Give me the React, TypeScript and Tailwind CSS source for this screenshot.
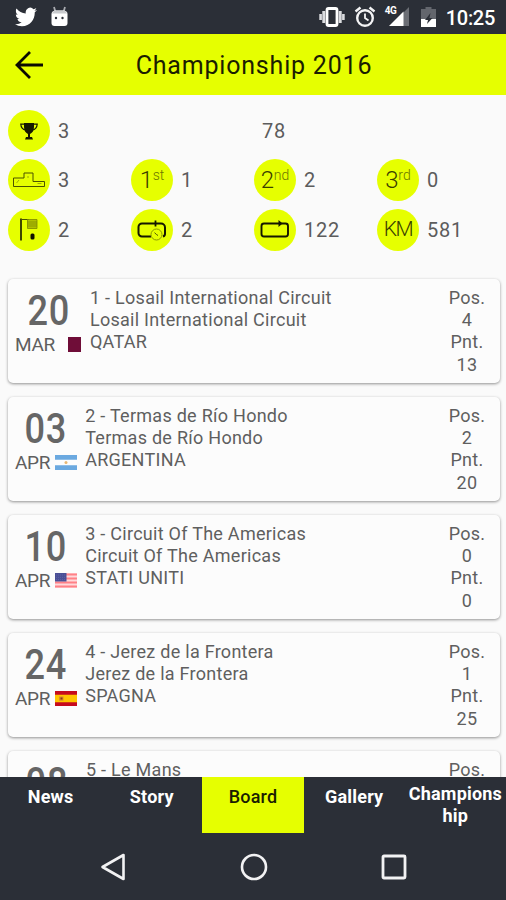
import type { ReactNode } from 'react';

interface Race {
  day: string;
  month: string;
  flag: ReactNode;
  title: string;
  circuit: string;
  country: string;
  pos: number;
  points: number;
}

// Flags, all drawn on a 22x15 box
const Qatar = () => (
  <svg width="22" height="15" viewBox="0 0 22 15">
    <path d="M0 0h9v15H0z" fill="#fdfdfd" />
    <path d="M8 0h13v15H8z" fill="#6f0d38" />
  </svg>
);

const Argentina = () => (
  <svg width="22" height="15" viewBox="0 0 22 15">
    <path d="M0 0h22v15H0z" fill="#fdfdfd" />
    <path d="M0 0h22v4.8H0zM0 10.2h22V15H0z" fill="#6ba9e0" />
    <circle cx="11" cy="7.5" r="1.5" fill="#e8b873" />
  </svg>
);

const Usa = () => (
  <svg width="22" height="15" viewBox="0 0 22 15">
    <path d="M0 0h22v15H0z" fill="#ffd9db" />
    <path d="M0 1.5h22M0 5.5h22M0 9.5h22M0 13.5h22" stroke="#ff8187" strokeWidth="1.8" />
    <path d="M0 0h11.5v8.5H0z" fill="#4a4f96" />
    <path d="M1 2h10M1 4.3h10M1 6.6h10" stroke="#666bab" strokeWidth=".7" strokeDasharray="1 1" />
  </svg>
);

const Spain = () => (
  <svg width="22" height="15" viewBox="0 0 22 15">
    <path d="M0 0h22v15H0z" fill="#ffc400" />
    <path d="M0 0h22v3.7H0zM0 11.3h22V15H0z" fill="#c60b1e" />
    <path d="M4 5.5h4.5v4.2H4z" fill="#d98f2c" />
    <path d="M5.5 6.5h2v2h-2z" fill="#8a3a1c" />
  </svg>
);

const races: Race[] = [
  { day: '20', month: 'MAR', flag: <Qatar />, title: '1 - Losail International Circuit', circuit: 'Losail International Circuit', country: 'QATAR', pos: 4, points: 13 },
  { day: '03', month: 'APR', flag: <Argentina />, title: '2 - Termas de Río Hondo', circuit: 'Termas de Río Hondo', country: 'ARGENTINA', pos: 2, points: 20 },
  { day: '10', month: 'APR', flag: <Usa />, title: '3 - Circuit Of The Americas', circuit: 'Circuit Of The Americas', country: 'STATI UNITI', pos: 0, points: 0 },
  { day: '24', month: 'APR', flag: <Spain />, title: '4 - Jerez de la Frontera', circuit: 'Jerez de la Frontera', country: 'SPAGNA', pos: 1, points: 25 },
];

// Only the top of this one shows above the tab bar
const nextRace = { day: '08', title: '5 - Le Mans' };

const tabs = ['News', 'Story', 'Board', 'Gallery', 'Championship'];

// Icons inside the yellow circles, 42x42
const Trophy = () => (
  <svg width="42" height="42" viewBox="0 0 42 42">
    <path d="M16 13h10v4c0 4-2 6-4 7v3h2l1 2.5h-8l1-2.5h2v-3c-2-1-4-3-4-7z" fill="#151800" />
    <path d="M16 14.2h-3.2c.2 3.2 1.8 5.3 5 5.8M26 14.2h3.2c-.2 3.2-1.8 5.3-5 5.8" fill="none" stroke="#151800" strokeWidth="1.2" />
  </svg>
);

const Podium = () => (
  <svg width="42" height="42" viewBox="0 0 42 42" fill="none" stroke="#4b5300" strokeWidth="1">
    <path d="M5.5 27.5V19h10.5v-5h9v8.500h11.500v5z" />
    <path d="M8.500 24l2.500-3M20 17v2M29.500 24.500h4" stroke="#8c9a00" strokeWidth=".8" />
  </svg>
);

const Flag = () => (
  <svg width="42" height="42" viewBox="0 0 42 42">
    <path d="M13 9.500v22" stroke="#151800" strokeWidth="1.600" />
    <path d="M13 10.500h8" stroke="#4b5300" strokeWidth="1" />
    <path d="M19.500 10.500h9.500v9h-9.500z" fill="#b1c000" stroke="#7d8900" strokeWidth=".8" />
    <path d="M19.500 13h9.500M19.500 15h9.500M19.500 17h9.500" stroke="#7d8900" strokeWidth=".7" />
    <rect x="22.500" y="24.500" width="4" height="6" rx="1.500" fill="#101200" />
  </svg>
);

const BestLap = () => (
  <svg width="42" height="42" viewBox="0 0 42 42">
    <path d="M20 27.500h-9a3.500 3.500 0 0 1-3.500-3.500v-6a3.500 3.500 0 0 1 3.500-3.500h19a4 4 0 0 1 4 4v6a3 3 0 0 1-2 3" fill="none" stroke="#151800" strokeWidth="2" />
    <path d="M24.500 11.500v6" stroke="#151800" strokeWidth="1.800" />
    <circle cx="25.500" cy="25.500" r="5.500" fill="#e6ff00" stroke="#8c9a00" strokeWidth="1" />
    <path d="M25.500 25.500l-2-1.800M25.500 25.500l1.500 1" stroke="#4b5300" strokeWidth="1" />
  </svg>
);

const Lap = () => (
  <svg width="42" height="42" viewBox="0 0 42 42">
    <rect x="7.500" y="14.500" width="26.500" height="13" rx="2.500" fill="none" stroke="#151800" strokeWidth="1.900" />
    <path d="M24.500 11l4 3.500-4 3.500z" fill="#151800" />
  </svg>
);

function Place({ n, suffix }: { n: string; suffix: string }) {
  return (
    <span className="flex items-start gap-[2px] font-light text-[#3a4000]">
      <span className="text-[24px] leading-[24px] w-[11px] tracking-[-1px]">{n}</span>
      <span className="text-[14px] leading-[14px] text-[#6c7700]">{suffix}</span>
    </span>
  );
}

function Stat({ icon, value }: { icon?: ReactNode; value: string }) {
  return (
    <div className="flex items-center gap-2 h-[42px]">
      {icon && (
        <div className="w-[42px] h-[42px] shrink-0 rounded-full bg-[#e6ff00] flex items-center justify-center">
          {icon}
        </div>
      )}
      <span className={`text-[20px] tracking-[0.7px] text-[#5c5c5c] ${icon ? '' : 'pl-2'}`}>{value}</span>
    </div>
  );
}

function RaceCard({ race }: { race: Race }) {
  return (
    <div className="h-[104px] shrink-0 rounded-[5px] bg-[#fcfcfc] shadow-[0_1px_3px_rgba(0,0,0,0.42)] flex text-[18px] leading-[22.400px] tracking-[0.27px] text-[#5f5f5f] whitespace-nowrap">
      <div className="pl-[7px] pt-[11px] flex flex-col items-center">
        <div className="text-[42px] leading-[42px] tracking-[1px] scale-x-[0.86] font-medium text-[#666666]">{race.day}</div>
        <div className="flex items-center gap-[5px] pt-[2px]">
          <span className="text-[19px] tracking-[-0.3px]">{race.month}</span>
          {race.flag}
        </div>
      </div>
      <div className="pl-2 pt-2 flex-1">
        <div>{race.title}</div>
        <div>{race.circuit}</div>
        <div>{race.country}</div>
      </div>
      <div className="w-[66px] pt-2 text-center">
        <div>Pos.</div>
        <div>{race.pos}</div>
        <div>Pnt.</div>
        <div>{race.points}</div>
      </div>
    </div>
  );
}

function StatusBar() {
  return (
    <div className="h-[34px] shrink-0 bg-[#2b2f37] flex items-center justify-between pl-[15px] pr-[11px] text-white">
      <div className="flex items-center gap-[13px]">
        <svg width="22" height="20" viewBox="0 1.500 24 21" preserveAspectRatio="none" fill="#fff">
          <path d="M23.950 4.570a10 10 0 0 1-2.820.770 4.960 4.960 0 0 0 2.160-2.720c-.950.560-2 .960-3.130 1.180a4.920 4.920 0 0 0-8.380 4.490C7.690 8.090 4.070 6.130 1.640 3.160a4.820 4.820 0 0 0-.670 2.480c0 1.710.870 3.210 2.190 4.100a4.900 4.900 0 0 1-2.230-.620v.060a4.920 4.920 0 0 0 3.950 4.830 5 5 0 0 1-2.210.080 4.940 4.940 0 0 0 4.600 3.420A9.870 9.870 0 0 1 0 19.540a14 14 0 0 0 7.550 2.210c9.050 0 14-7.500 14-13.980 0-.210 0-.420-.020-.630a9.940 9.940 0 0 0 2.420-2.570z" />
        </svg>
        <svg width="19" height="22" viewBox="0 0 19 22">
          <path d="M4 1l1.500 5M15 1l-1.500 5" stroke="#a9abb0" strokeWidth="1.800" />
          <path d="M1.500 8q0-3 3.500-3.500h9q3.500.5 3.500 3.500v9q0 3-3 3h-10q-3 0-3-3z" fill="#fff" />
          <path d="M2 7.500q1-3 4-3h7q3 0 4 3z" fill="#c9cbce" />
          <circle cx="6" cy="12" r="1.200" fill="#2b2f37" />
          <circle cx="12.500" cy="12" r="1.200" fill="#2b2f37" />
        </svg>
      </div>
      <div className="flex items-center">
        <svg width="26" height="20" viewBox="0 0 26 20">
          <rect x="8" y="1.500" width="10" height="17" rx="1.500" fill="none" stroke="#fff" strokeWidth="2.800" />
          <path d="M4.800 4v12M21.200 4v12" stroke="#dcdde0" strokeWidth="3" />
          <path d="M1.600 7v6M24.400 7v6" stroke="#dcdde0" strokeWidth="2.600" />
        </svg>
        <svg className="ml-[9px]" width="22" height="22" viewBox="0 0 22 22" fill="none" stroke="#f4f4f5" strokeWidth="2.400">
          <circle cx="11" cy="12" r="7.800" />
          <path d="M1.500 5.500l5-4M20.500 5.500l-5-4" />
          <path d="M11 7.500V12l3.500 2.500" strokeWidth="1.800" />
        </svg>
        <div className="ml-[8px] relative w-[26px] h-[20px]">
          <svg width="26" height="20" viewBox="0 0 26 20">
            <path d="M25 0v19H19V6z" fill="#6b6e75" />
            <path d="M19.500 4.500V19H5z" fill="#fff" />
          </svg>
          <span className="absolute left-[1px] -top-[1px] text-[10px] leading-[10px] font-bold tracking-[-0.5px]">4G</span>
        </div>
        <svg className="ml-[11px]" width="15" height="20" viewBox="0 0 15 20">
          <path d="M4.500 0h6v2H15v18H0V2h4.500z" fill="#63666d" />
          <path d="M0 12h15v8H0z" fill="#fff" />
          <path d="M9.500 6L4 13h3l-1 4 5.500-6h-3z" fill="#2b2f37" />
        </svg>
        <span className="ml-[10px] text-[20px] font-medium tracking-[-0.3px] pt-[2px]">10:25</span>
      </div>
    </div>
  );
}

export default function App() {
  return (
    <div className="w-[506px] h-[900px] flex flex-col overflow-hidden bg-[#fafafa] font-['Roboto',sans-serif]">
      <StatusBar />

      {/* Header */}
      <div className="h-[61px] shrink-0 bg-[#e6ff00] flex items-center px-[15px]">
        <svg width="28" height="28" viewBox="0 0 28 28" fill="none" stroke="#0b0c00" strokeWidth="2.800">
          <path d="M15 1L2 14l13 13M2 14h26" />
        </svg>
        <h1 className="flex-1 text-center text-[25px] leading-[30px] tracking-[0.8px] text-[#1b1d00] pr-[26px] pt-[2px]">Championship 2016</h1>
      </div>

      {/* Season stats */}
      <div className="shrink-0 pl-2 pt-[15px] grid grid-cols-[123px_123px_123px_123px] gap-y-[7.300px]">
        <Stat icon={<Trophy />} value="3" />
        <div />
        <Stat value="78" />
        <div />
        <Stat icon={<Podium />} value="3" />
        <Stat icon={<Place n="1" suffix="st" />} value="1" />
        <Stat icon={<Place n="2" suffix="nd" />} value="2" />
        <Stat icon={<Place n="3" suffix="rd" />} value="0" />
        <Stat icon={<Flag />} value="2" />
        <Stat icon={<BestLap />} value="2" />
        <Stat icon={<Lap />} value="122" />
        <Stat icon={<span className="text-[21px] font-light tracking-[-1.500px] text-[#3a4000]">KM</span>} value="581" />
      </div>

      {/* Race list */}
      <div className="flex-1 min-h-0 overflow-hidden mt-[22px] pt-[6px] pl-2 pr-[6px] flex flex-col gap-[14px]">
        {races.map(race => (
          <RaceCard key={race.title} race={race} />
        ))}
        <div className="h-[104px] shrink-0 rounded-[5px] bg-[#fcfcfc] shadow-[0_1px_3px_rgba(0,0,0,0.42)] flex text-[18px] leading-[22.400px] tracking-[0.27px] text-[#5f5f5f]">
          <div className="w-[78px] pt-[11px] text-center text-[42px] leading-[42px] tracking-[1px] scale-x-[0.86] font-medium text-[#666666]">{nextRace.day}</div>
          <div className="pt-2 flex-1">{nextRace.title}</div>
          <div className="w-[66px] pt-2 text-center">Pos.</div>
        </div>
      </div>

      {/* Tabs */}
      <div className="h-[56px] shrink-0 bg-[#2b2f37] grid grid-cols-5">
        {tabs.map(tab => (
          <div
            key={tab}
            className={`flex justify-center text-center text-[18px] leading-[22px] tracking-[0.2px] ${tab === 'Board' ? 'bg-[#e6ff00] text-[#1b1d00] font-medium' : 'text-white font-bold'} ${tab === 'Championship' ? 'pt-[6px]' : 'pt-[9px]'}`}
          >
            {tab === 'Championship' ? <span>Champions<br />hip</span> : tab}
          </div>
        ))}
      </div>

      {/* Android navigation */}
      <div className="h-[67px] shrink-0 bg-[#2b2f37] flex items-center justify-between pl-[99px] pr-[98px]">
        <svg width="28" height="28" viewBox="0 0 28 28" fill="none" stroke="#f2f2f3" strokeWidth="2.600" strokeLinejoin="round">
          <path d="M24.500 2v24L3.500 14z" />
        </svg>
        <svg width="28" height="28" viewBox="0 0 28 28" fill="none" stroke="#f2f2f3" strokeWidth="2.600">
          <circle cx="14" cy="14" r="12" />
        </svg>
        <svg width="28" height="28" viewBox="0 0 28 28" fill="none" stroke="#f2f2f3" strokeWidth="2.800">
          <rect x="3" y="3" width="22" height="22" rx="1" />
        </svg>
      </div>
    </div>
  );
}
